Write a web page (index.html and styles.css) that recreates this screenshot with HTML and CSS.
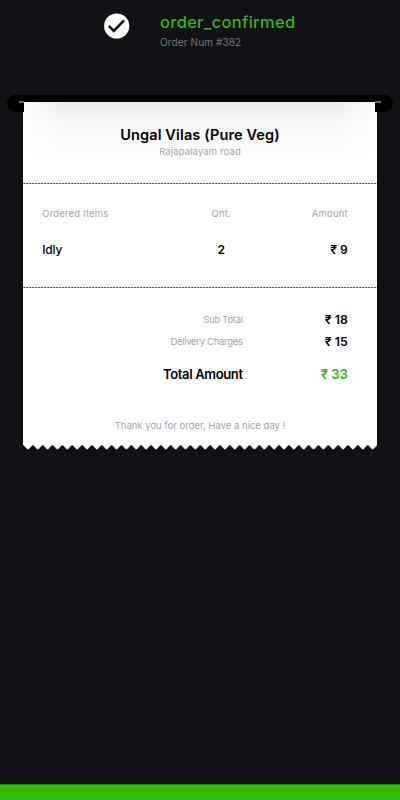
FILE: index.html
```html
<!DOCTYPE html>
<html lang="en">
<head>
<meta charset="utf-8">
<title>Order confirmed</title>
<link rel="stylesheet" href="styles.css">
</head>
<body>
<div class="screen">
  <header class="status">
    <svg class="check" viewBox="0 0 26 26"><circle cx="12.7" cy="13" r="12.6" fill="#fff"/><path d="M4.8 12.9l5 5L20 7.4" fill="none" stroke="#121116" stroke-width="2.5"/></svg>
    <div>
      <h1>order_confirmed</h1>
      <p class="number">Order Num #382</p>
    </div>
  </header>
  <main class="printer">
    <div class="slot"></div>
    <section class="receipt">
      <div class="shop">
        <h2>Ungal Vilas (Pure Veg)</h2>
        <p class="muted road">Rajapalayam road</p>
      </div>
      <svg class="rule" viewBox="0 0 354 1"><path d="M0 .5H354" stroke="#444" stroke-dasharray="2 1"/></svg>
      <div class="items">
        <span class="muted">Ordered Items</span><span class="muted center">Qnt.</span><span class="muted end">Amount</span>
        <b class="name">Idly</b><b class="center">2</b><b class="end">₹ 9</b>
      </div>
      <svg class="rule" viewBox="0 0 354 1"><path d="M0 .5H354" stroke="#444" stroke-dasharray="2 1"/></svg>
      <div class="totals">
        <span class="muted">Sub Total</span><b>₹ 18</b>
        <span class="muted">Delivery Charges</span><b>₹ 15</b>
        <b class="grand label">Total Amount</b><b class="grand green">₹ 33</b>
      </div>
      <p class="thanks muted">Thank you for order, Have a nice day !</p>
    </section>
    <svg class="teeth" viewBox="0 0 354.6 5" preserveAspectRatio="none"><defs><pattern id="tooth" width="9.85" height="5" patternUnits="userSpaceOnUse"><path d="M0 0L.8 .4L4 4Q4.9 4.9 5.8 4L9.05 .4L9.85 0Z" fill="#fff"/></pattern></defs><rect width="354.6" height="5" fill="url(#tooth)"/></svg>
    <i class="lip left"></i><i class="lip right"></i>
  </main>
  <footer class="action"></footer>
</div>
</body>
</html>
```
FILE: styles.css
```css
* { box-sizing: border-box; }
body { margin: 0; background: #121116; font-family: Inter, "Noto Sans", sans-serif; }
h1, h2, p { margin: 0; }
span, b { white-space: nowrap; }
.screen { height: 800px; display: flex; flex-direction: column; overflow: hidden; }
.status { height: 95px; padding: 11px 0 0 104px; display: flex; gap: 30px; align-items: flex-start; }
.check { width: 26px; height: 26px; margin-top: 2px; flex: none; }
h1 { font-size: 16.5px; line-height: 22px; font-weight: 500; letter-spacing: .3px; color: #37b315; }
.number { font-size: 10px; line-height: 14px; margin-top: 2px; letter-spacing: .12px; color: #77767a; }
.printer { position: relative; width: 386px; margin: 0 auto; flex: 1; }
.slot { height: 17px; border-radius: 9px; background: #000; }
.receipt { position: relative; width: 354.6px; height: 343px; margin: -10.5px auto 0; background: #fff; display: flex; flex-direction: column; }
.receipt::before { content: ""; position: absolute; inset: 0 0 auto; height: 60px; background: linear-gradient(90deg, rgba(255,255,255,.8), transparent 12%, transparent 88%, rgba(255,255,255,.8)), linear-gradient(#ebe9eb, #f7f6f7 35%, #fff); }
.teeth { display: block; width: 354.6px; height: 5px; margin: 0 auto; }
.shop { position: relative; height: 81.5px; padding-top: 22.5px; text-align: center; }
h2 { font-size: 14.5px; line-height: 21px; font-weight: 600; letter-spacing: .13px; color: #000; }
.muted { color: #a6a6a6; font-size: 9.5px; line-height: 13px; }
.road { letter-spacing: .12px; }
.rule { display: block; width: 100%; height: 1px; flex: none; }
b { font-size: 12px; line-height: 16px; font-weight: 600; color: #000; }
.items { height: 102.5px; padding: 23px 29.5px 0 19.5px; display: grid; grid-template-columns: 148px 62px 1fr; grid-template-rows: 13px 16px; row-gap: 22px; }
.items .muted { letter-spacing: .17px; }
.name { letter-spacing: -.2px; font-weight: 500; }
.center { text-align: center; }
.end { text-align: right; }
.totals { padding: 24px 29.5px 0 19.5px; display: grid; grid-template-columns: 200.5px 1fr; grid-template-rows: 16px 16px 18px; row-gap: 6px; text-align: right; align-items: center; }
.totals .muted { letter-spacing: -.3px; }
.totals b { font-size: 12.3px; }
.totals .grand { margin-top: 18px; font-size: 13px; }
.totals .label { letter-spacing: -.35px; }
.green { color: #37b315; }
.thanks { text-align: center; margin-top: 45px; }
.lip { position: absolute; top: 6px; width: 5px; height: 11px; background: #000; border-top: 2px solid #666; }
.left { left: 12px; }
.right { right: 12px; width: 6px; }
.action { height: 16px; background: #32bb08; border-top: 1px solid #238205; }
```
